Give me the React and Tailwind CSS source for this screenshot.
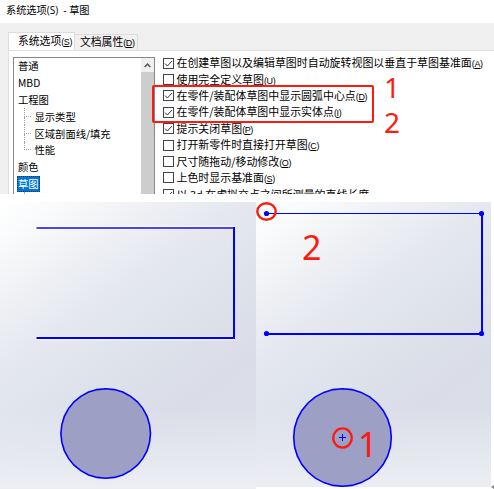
const cjk = "font-['Noto_Sans_CJK_SC','Liberation_Sans',sans-serif]";

const pages = [
  { label: '普通' },
  { label: 'MBD' },
  { label: '工程图' },
  { label: '显示类型', child: true },
  { label: '区域剖面线/填充', child: true },
  { label: '性能', child: true, last: true },
  { label: '颜色' },
  { label: '草图', selected: true },
];

const options = [
  { label: '在创建草图以及编辑草图时自动旋转视图以垂直于草图基准面', hot: 'A', checked: true },
  { label: '使用完全定义草图', hot: 'U' },
  { label: '在零件/装配体草图中显示圆弧中心点', hot: 'D', checked: true },
  { label: '在零件/装配体草图中显示实体点', hot: 'I', checked: true },
  { label: '提示关闭草图', hot: 'P', checked: true },
  { label: '打开新零件时直接打开草图', hot: 'C' },
  { label: '尺寸随拖动/移动修改', hot: 'O' },
  { label: '上色时显示基准面', hot: 'S' },
  { label: '以 3d 在虚拟交点之间所测量的直线长度', checked: true },
];

function HotKey({ letter }) {
  return (
    <span className="text-[9px] tracking-[-0.4px] font-['Liberation_Sans',sans-serif]">
      (<span className="underline underline-offset-1">{letter}</span>)
    </span>
  );
}

function PageItem({ label, child, last, selected }) {
  if (child) {
    return (
      <li className="flex h-[16.8px] items-center pl-[10px]">
        <span className="flex h-full w-[7px] shrink-0 flex-col">
          <span className="h-1/2 w-full border-b border-l border-dotted border-[#a0a0a0]" />
          <span className={last ? 'h-1/2' : 'h-1/2 border-l border-dotted border-[#a0a0a0]'} />
        </span>
        <span className="pl-[3.5px]">{label}</span>
      </li>
    );
  }
  return (
    <li className="flex h-[16.8px] items-center pl-[3px]">
      <span className={selected ? 'flex h-4 items-center bg-[#0078d7] px-px text-white outline-1 -outline-offset-1 outline-dotted outline-[#333]' : 'px-px'}>
        {label}
      </span>
    </li>
  );
}

function Option({ label, hot, checked }) {
  return (
    <div className="flex h-[16.4px] items-center">
      <span className="flex size-[11px] shrink-0 items-center justify-center border border-[#444] bg-white">
        {checked && (
          <svg className="size-[9px]" viewBox="0 0 9 9" fill="none" stroke="#333" strokeWidth="1">
            <path d="M1 4.5 3.4 7 8 2" />
          </svg>
        )}
      </span>
      <span className="pl-[2.5px]">{label}{hot && <HotKey letter={hot} />}</span>
    </div>
  );
}

function discPoints(cx, cy, r) {
  return Array.from({ length: 32 }, (_, i) => {
    const a = (i * 2 * Math.PI) / 32;
    return `${(cx + r * Math.cos(a)).toFixed(1)},${(cy + r * Math.sin(a)).toFixed(1)}`;
  }).join(' ');
}

const canvasShade =
  'bg-[linear-gradient(to_bottom,transparent_72%,#eceef3_100%),linear-gradient(145deg,#ffffff_0%,#fafbfc_8%,#eff1f4_22%,#e5e8ef_36%,#dfe3eb_50%,#dadde8_70%,#dcdfea_100%)]';

export default function App() {
  return (
    <div className={`flex h-[489px] w-[494px] flex-col overflow-hidden whitespace-nowrap bg-white text-black ${cjk}`}>
      <section className="relative h-[194px] shrink-0 overflow-hidden bg-[#f0f0f0]">
        <header className="flex h-[23px] items-center bg-white pb-[3px] pl-[6px] text-[10.2px]">
          <span>系统选项<span className="font-['Open_Sans',sans-serif] text-[10px]">(S)&nbsp;&nbsp;-&nbsp;</span>草图</span>
        </header>
        <div className="flex h-[27px] items-end pl-[8px] text-[10.8px]">
          <div className="flex h-[18px] w-[67px] items-center border-x border-t border-[#dcdcdc] bg-white pb-px pl-[9px]">
            <span>系统选项<HotKey letter="S" /></span>
          </div>
          <div className="flex h-4 w-[63px] items-center border-r border-t border-[#dcdcdc] pb-px pl-[5px]">
            <span>文档属性<HotKey letter="D" /></span>
          </div>
        </div>
        <div className="ml-[8px] flex h-[144px] items-start border-l border-t border-[#e0e0e0] bg-white pl-[4px] pt-[6px]">
          <div className="flex h-[140px] w-[142px] shrink-0 border border-[#828790]">
            <ul className="-mt-px flex-1 pt-px text-[10.3px] leading-[16px]">
              {pages.map((p) => <PageItem key={p.label} {...p} />)}
              <li className="ml-[10px] h-2 border-l border-dotted border-[#a0a0a0]" />
            </ul>
            <div className="flex w-[13px] flex-col bg-[#cdcdcd]">
              <div className="flex h-[14px] items-center justify-center bg-[#f0f0f0]">
                <svg className="size-[7px]" viewBox="0 0 7 7" fill="none" stroke="#505050" strokeWidth="1.4"><path d="M.7 5 3.5 2 6.3 5" /></svg>
              </div>
            </div>
          </div>
          <div className="-mt-[2px] pl-[8px] text-[10.95px] leading-[16px]">
            {options.map((o) => <Option key={o.label} {...o} />)}
          </div>
        </div>
        <div className="absolute left-[152px] top-[85px] h-[38px] w-[222px] rounded-[2px] border-[2.5px] border-[#ff1a10]" />
        <div className="absolute left-[384px] top-[70px] font-['Noto_Sans',sans-serif] text-[28px] leading-[34px] text-[#ff1a10]">1</div>
        <div className="absolute left-[384px] top-[105px] font-['Noto_Sans',sans-serif] text-[28px] leading-[34px] text-[#ff1a10]">2</div>
      </section>
      <main className="flex flex-1 pt-[8px]">
        <div className={`h-[287px] w-[256px] ${canvasShade}`}>
          <svg className="block" width="256" height="287" fill="none" stroke="#0000ff">
            <path d="M36.5 25.5H235M36.5 136.5H235" stroke="#fff" strokeWidth="4" opacity=".6" />
            <path d="M36.5 26H234" stroke="#4a45ee" strokeWidth="2" />
            <path d="M234 25V137M36.5 136H235" strokeWidth="2" />
            <polygon points={discPoints(105.7, 231.5, 44.8)} fill="#9d9fc5" strokeWidth="1.6" />
          </svg>
        </div>
        <div className={`relative h-[285px] w-[235px] ${canvasShade}`}>
          <svg className="block" width="235" height="285" fill="none" stroke="#0000ff">
            <path d="M10 11.5H226" />
            <path d="M226 11V132M10 132H227" strokeWidth="2" />
            <g fill="#0000ff" stroke="none">
              <circle cx="10.5" cy="11.5" r="2.6" />
              <circle cx="225.5" cy="11.5" r="2.6" />
              <circle cx="10.5" cy="131.5" r="2.6" />
              <circle cx="225.5" cy="131.5" r="2.6" />
            </g>
            <polygon points={discPoints(86.5, 235.5, 48.8)} fill="#9d9fc5" strokeWidth="1.6" />
            <path d="M83 235.5H90M86.5 232V239" />
            <ellipse cx="10.5" cy="9.5" rx="9.2" ry="8.2" stroke="#ff1a10" strokeWidth="2.4" />
            <ellipse cx="86.5" cy="236" rx="9.3" ry="9.6" stroke="#ff1a10" strokeWidth="2.4" />
          </svg>
          <div className="absolute left-[46px] top-[25px] font-['Noto_Sans',sans-serif] text-[34px] leading-[40px] text-[#ff1a10]">2</div>
          <div className="absolute left-[102px] top-[222px] font-['Noto_Sans',sans-serif] text-[34px] leading-[40px] text-[#ff1a10]">1</div>
        </div>
        <svg className="mt-[283px]" width="3" height="4" viewBox="0 0 3 4"><path d="M0 2 3 0V4Z" fill="#888" /></svg>
      </main>
    </div>
  );
}
